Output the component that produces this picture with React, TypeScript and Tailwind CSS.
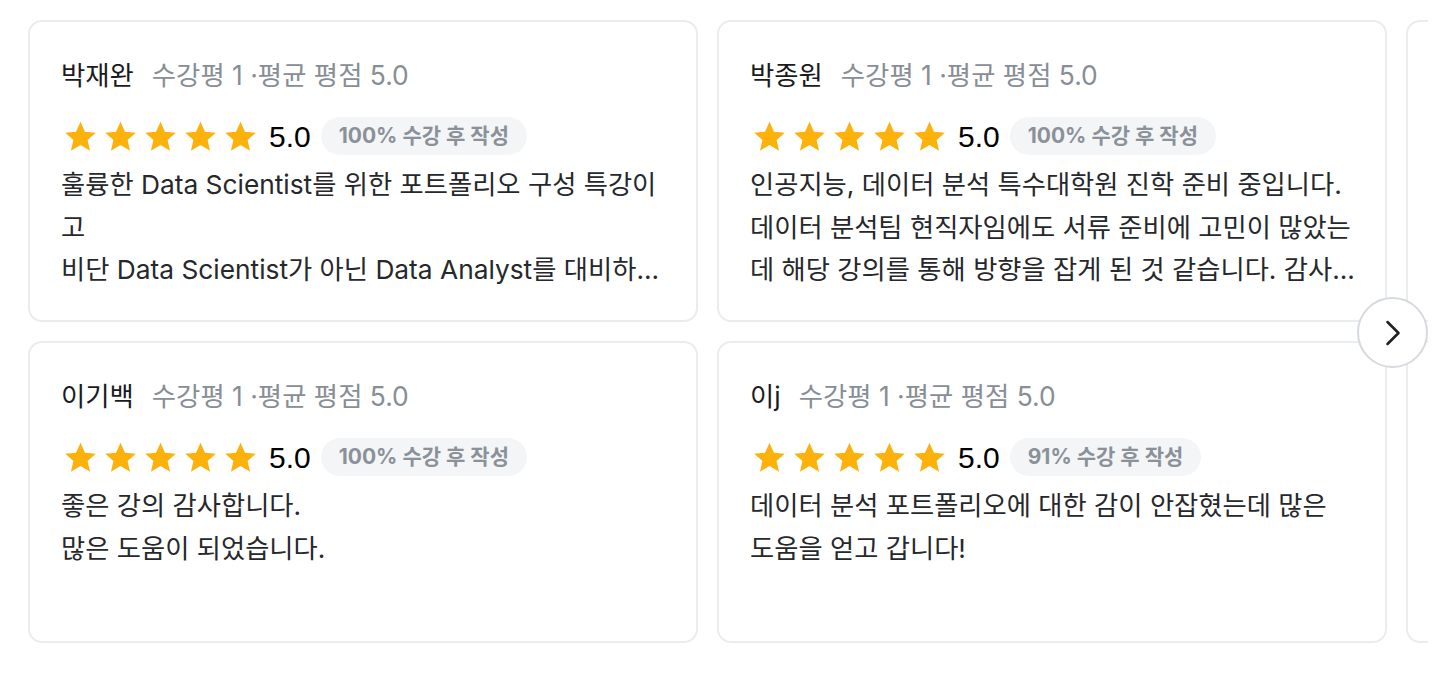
import { ChevronRight } from 'lucide-react'

type Review = {
  name: string
  count: number
  avg: string
  rating: string
  progress: string
  lines: string[]
}

const reviews: Review[][] = [
  [
    {
      name: '박재완',
      count: 1,
      avg: '5.0',
      rating: '5.0',
      progress: '100%',
      lines: [
        '훌륭한 Data Scientist를 위한 포트폴리오 구성 특강이',
        '고',
        '비단 Data Scientist가 아닌 Data Analyst를 대비하...',
      ],
    },
    {
      name: '박종원',
      count: 1,
      avg: '5.0',
      rating: '5.0',
      progress: '100%',
      lines: [
        '인공지능, 데이터 분석 특수대학원 진학 준비 중입니다.',
        '데이터 분석팀 현직자임에도 서류 준비에 고민이 많았는',
        '데 해당 강의를 통해 방향을 잡게 된 것 같습니다. 감사...',
      ],
    },
    { name: '', count: 1, avg: '5.0', rating: '5.0', progress: '100%', lines: [] },
  ],
  [
    {
      name: '이기백',
      count: 1,
      avg: '5.0',
      rating: '5.0',
      progress: '100%',
      lines: ['좋은 강의 감사합니다.', '많은 도움이 되었습니다.'],
    },
    {
      name: '이j',
      count: 1,
      avg: '5.0',
      rating: '5.0',
      progress: '91%',
      lines: ['데이터 분석 포트폴리오에 대한 감이 안잡혔는데 많은', '도움을 얻고 갑니다!'],
    },
    { name: '', count: 1, avg: '5.0', rating: '5.0', progress: '100%', lines: [] },
  ],
]

function Star() {
  return (
    <svg viewBox="0 0 24 24" className="w-[35px] h-[35px] -mx-[1.5px]">
      <path
        d="M12 1.8l3.05 6.9 7.45.7-5.65 4.95 1.7 7.35L12 17.85 5.45 21.7l1.7-7.35L1.5 9.4l7.45-.7z"
        fill="#fcb10b"
      />
    </svg>
  )
}

function ReviewCard({ review }: { review: Review }) {
  return (
    <div className="w-[670px] h-[302px] shrink-0 rounded-[14px] border-2 border-[#eaedf0] bg-white px-[31px] pt-[38px]">
      {review.name && (
        <>
          <div className="flex items-center h-[32px] text-[26.4px]">
            <span className="text-[#1a1b1d]">{review.name}</span>
            <span className="ml-[18px] text-[#878e96]">
              수강평 {review.count} ·평균 평점 {review.avg}
            </span>
          </div>
          <div className="flex items-center h-[40px] mt-[24px]">
            <div className="flex gap-[8px] ml-[3px]">
              {[0, 1, 2, 3, 4].map((i) => (
                <Star key={i} />
              ))}
            </div>
            <span className="ml-[13px] text-[30px] text-black font-['Liberation_Sans',sans-serif]">
              {review.rating}
            </span>
            <span className="ml-[10px] h-[38px] px-[18px] flex items-center rounded-full bg-[#f4f5f7] text-[21px] font-bold text-[#8a9199]">
              {review.progress} 수강 후 작성
            </span>
          </div>
          <div className="mt-[8px] text-[26.3px] leading-[42.5px] text-[#26282b]">
            {review.lines.map((l, i) => (
              <div key={i} className="whitespace-nowrap">
                {l}
              </div>
            ))}
          </div>
        </>
      )}
    </div>
  )
}

export default function App() {
  return (
    <div className="relative w-[1452px] h-[680px] bg-white font-['Inter','Noto_Sans_CJK_KR',sans-serif]">
      <div className="ml-[28px] pt-[20px] w-[1400px] overflow-hidden">
        <div className="flex flex-col gap-[19px]">
          {reviews.map((row, r) => (
            <div key={r} className="flex gap-[19px]">
              {row.map((rv, i) => (
                <ReviewCard key={i} review={rv} />
              ))}
            </div>
          ))}
        </div>
      </div>
      <button className="absolute left-[1357px] top-[297px] w-[71px] h-[71px] rounded-full border-2 border-[#d6dade] bg-white flex items-center justify-center">
        <ChevronRight size={44} strokeWidth={1.4} color="#1f2124" />
      </button>
    </div>
  )
}
